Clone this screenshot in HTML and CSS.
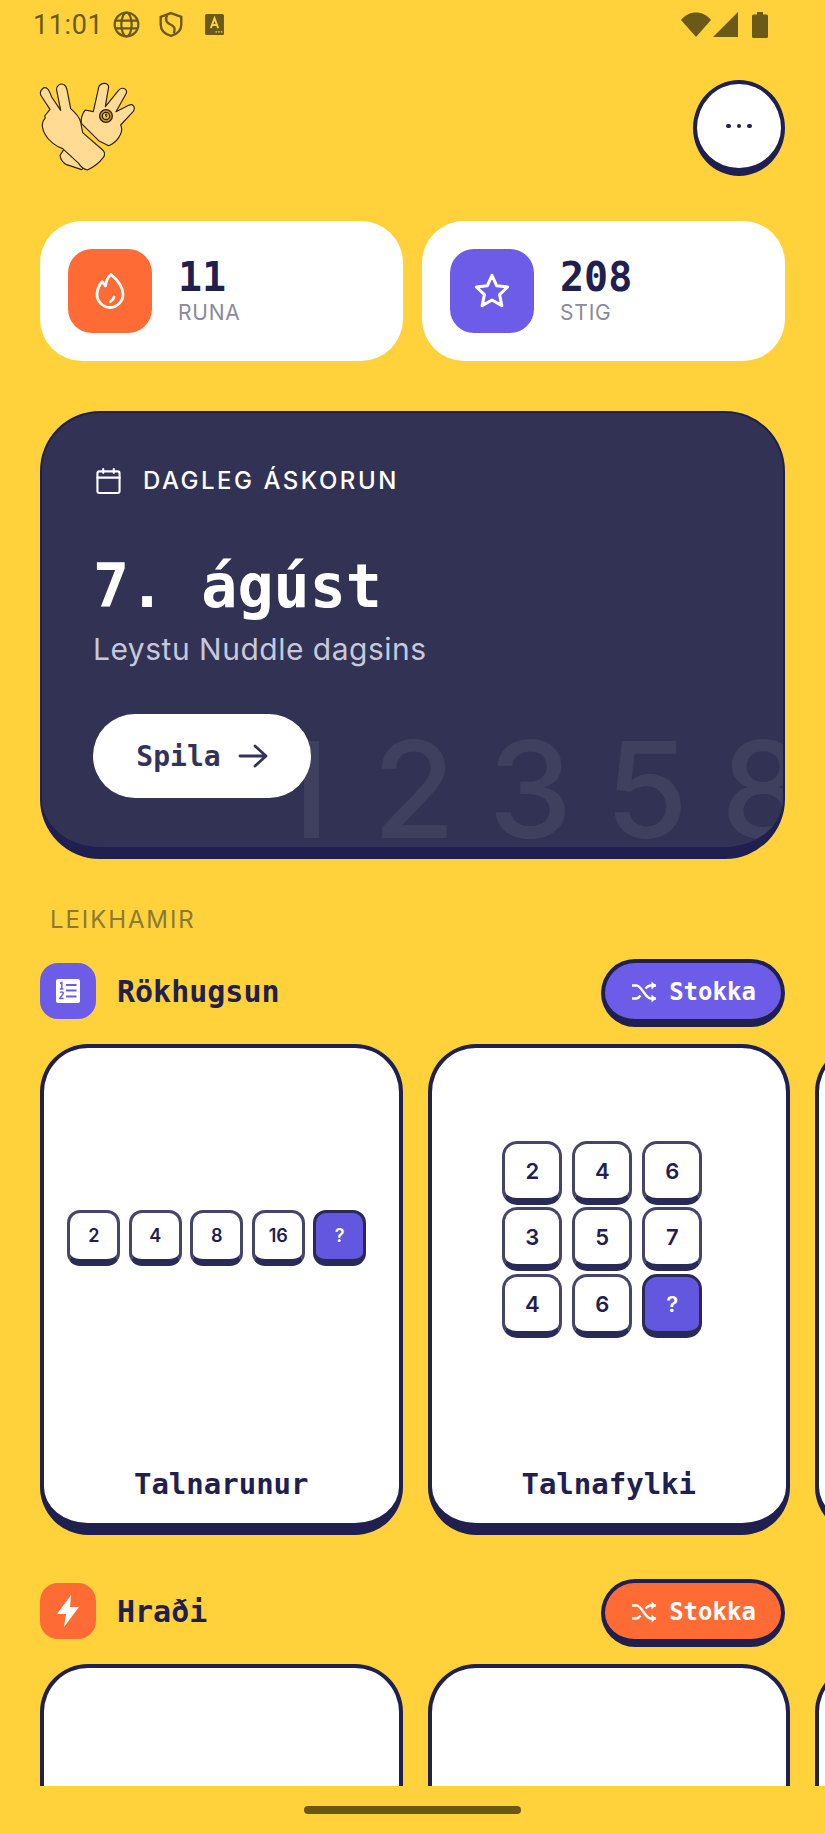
FILE: index.html
```html
<!DOCTYPE html>
<html lang="is">
<head>
  <meta charset="UTF-8">
  <title>Nuddle</title>
  <link rel="stylesheet" href="styles.css">
</head>
<body>
  <div class="screen">
    <div class="status-bar">
      <span class="clock">11:01</span>
      <svg class="status-icon globe" viewBox="0 0 24 24" fill="none" stroke="#6b5a17" stroke-width="2"><circle cx="12" cy="12" r="10.500"/><ellipse cx="12" cy="12" rx="4.600" ry="10.500"/><path d="M2 8.500h20M2 15.500h20"/></svg>
      <svg class="status-icon shield" viewBox="0 0 24 24" fill="none" stroke="#6b5a17" stroke-width="2.200"><path d="M12 1.500 21.500 5v7c0 5.500-4 9-9.500 10.500C6.500 21 2.500 17.500 2.500 12V5z"/><path d="M8.500 3.500C6 8 8 10.500 11.500 12c3.500 1.500 5 4 3 8"/></svg>
      <svg class="status-icon sim" viewBox="0 0 18 20"><rect width="18" height="20" rx="1.500" fill="#6b5a17"/><path d="M5.500 13.500 9 4l3.500 9.500M6.800 10.500h4.400" fill="none" stroke="#ffd23b" stroke-width="1.800"/><path d="M10 17h1.500M12.500 17H14M15 17h1.500" stroke="#ffd23b" stroke-width="1.200"/></svg>
      <span class="status-spacer"></span>
      <svg class="status-icon wifi" viewBox="0 0 30 25"><path d="M15 25 0 8C4 3 9 .5 15 .5S26 3 30 8z" fill="#6b5a17"/></svg>
      <svg class="status-icon signal" viewBox="0 0 25 25"><path d="M25 0v25H0z" fill="#6b5a17"/></svg>
      <svg class="status-icon battery" viewBox="0 0 16 26"><path d="M5 0h6v2.500h3.500a1.500 1.500 0 0 1 1.500 1.500v20.500a1.500 1.500 0 0 1-1.500 1.500h-13A1.500 1.500 0 0 1 0 24.500V4a1.500 1.500 0 0 1 1.500-1.500H5z" fill="#6b5a17"/></svg>
    </div>

    <header class="top-row">
      <svg class="logo" viewBox="0 0 360 300" fill="#ffdb94" stroke="#2a2208" stroke-width="3.500" stroke-linejoin="round">
        <path d="M105 203 90 226c2 12 8 22 20 28l45 15 25-20z"/>
        <path d="M190 95 206 22c3-13 28-18 30-2L226 80 265 32c8-12 28-8 24 8L258 95 296 76c12-6 22 4 14 18L272 135c6 12 3 25-6 38-8 12-20 20-30 24l-30-15-52-52c-2-12 2-30 12-40z"/>
        <path d="M32 45C28 30 42 18 52 26c5 4 8 12 13 25l27 40-12-60C78 18 90 8 102 14c8 4 8 12 10 20l10 52c14 12 26 24 30 40l6 32 60 52c6 6 8 14 2 22-12 16-30 30-48 38-10-2-20-10-26-20l-48-44c-20-6-42-24-52-42-8-14-12-30-6-42l6-8-2-6 16-20z"/>
        <circle cx="228" cy="108" r="19" fill="#c99a2e" stroke-width="4"/>
        <circle cx="228" cy="108" r="11" fill="#ffd23b" stroke-width="4"/>
        <path d="M225 103h6l-5 5h6l-5 5" fill="none" stroke-width="3"/>
      </svg>
      <button class="menu-btn" type="button"><span></span><span></span><span></span></button>
    </header>

    <section class="stats">
      <div class="stat-card">
        <div class="stat-icon orange">
          <svg class="flame" viewBox="0 0 30 36" fill="none" stroke="#fff" stroke-width="2.800" stroke-linecap="round" stroke-linejoin="round"><path d="M16 1.500c6 5 12 12 12 20 0 7-6 13-13 13S2 28.500 2 21.500c0-5 2-9 5-13l3.500 4.500C11 8 13 4 16 1.500z"/><path d="M19 24c-.5 2-1.500 3.500-3.500 4.500"/></svg>
        </div>
        <div class="stat-text">
          <span class="stat-value">11</span>
          <span class="stat-label">RUNA</span>
        </div>
      </div>
      <div class="stat-card">
        <div class="stat-icon purple">
          <svg viewBox="0 0 38 38" fill="none" stroke="#fff" stroke-width="3.200" stroke-linejoin="round"><path d="M19 2.500 24 13.500l11.500 1.300-8.500 8 2.400 11.700L19 28.500 8.600 34.500 11 22.800l-8.500-8L14 13.500z"/></svg>
        </div>
        <div class="stat-text">
          <span class="stat-value">208</span>
          <span class="stat-label">STIG</span>
        </div>
      </div>
    </section>

    <section class="daily-card">
      <div class="daily-numbers"><span>1</span><span>2</span><span>3</span><span>5</span><span>8</span></div>
      <div class="daily-head">
        <svg viewBox="0 0 26 28" fill="none" stroke="#fff" stroke-width="2.200" stroke-linecap="round"><rect x="1.500" y="4" width="23" height="22.500" rx="2"/><path d="M1.500 10.500h23M7.500 1.500v4M18.500 1.500v4"/></svg>
        <span>DAGLEG ÁSKORUN</span>
      </div>
      <h1 class="daily-date">7. ágúst</h1>
      <p class="daily-sub">Leystu Nuddle dagsins</p>
      <button class="play-btn" type="button">
        Spila
        <svg viewBox="0 0 30 24" fill="none" stroke="#32325a" stroke-width="2.800" stroke-linecap="round" stroke-linejoin="round"><path d="M2 12h26M17 2l11 10-11 10"/></svg>
      </button>
    </section>

    <h2 class="modes-title">LEIKHAMIR</h2>

    <div class="section-head">
      <div class="section-icon purple">
        <svg viewBox="0 0 24 24"><rect width="24" height="24" rx="2" fill="#fff"/><path d="M4 4.500 5.800 3.500v6.500M3.800 10h3.600M4 13.500c1-1 3.500-.7 3.300 1-.2 1.500-2.500 2.500-3.500 5h3.800" fill="none" stroke="#6c5ce7" stroke-width="1.500"/><path d="M10 6h10.500M10 11.500h10.500M10 17.500h10.500" stroke="#6c5ce7" stroke-width="1.800"/></svg>
      </div>
      <h3 class="section-title">Rökhugsun</h3>
      <button class="shuffle-btn purple" type="button">
        <svg viewBox="0 0 26 22" fill="none" stroke="#fff" stroke-width="2.400"><path d="M1 4.500h4.500c5 0 9 13 14 13H25M1 17.500h4.500c1.500 0 3-1.500 4-3M14.500 7.500c1.500-1.500 3-3 5-3H25"/><path d="M20.500 .5v8l4.500-4zM20.500 13.500v8l4.500-4z" fill="#fff" stroke="none"/></svg>
        Stokka
      </button>
    </div>

    <div class="card-row">
      <article class="game-card">
        <div class="game-preview">
          <div class="seq">
            <div class="tile small">2</div>
            <div class="tile small">4</div>
            <div class="tile small">8</div>
            <div class="tile small">16</div>
            <div class="tile small ask">?</div>
          </div>
        </div>
        <div class="game-name">Talnarunur</div>
      </article>
      <article class="game-card">
        <div class="game-preview">
          <div class="matrix">
            <div class="tile">2</div><div class="tile">4</div><div class="tile">6</div>
            <div class="tile">3</div><div class="tile">5</div><div class="tile">7</div>
            <div class="tile">4</div><div class="tile">6</div><div class="tile ask">?</div>
          </div>
        </div>
        <div class="game-name">Talnafylki</div>
      </article>
      <article class="game-card"></article>
    </div>

    <div class="section-head second">
      <div class="section-icon orange">
        <svg viewBox="0 0 24 32"><path d="M15 0 1 19h9l-2 13 15-20h-9z" fill="#fff"/></svg>
      </div>
      <h3 class="section-title">Hraði</h3>
      <button class="shuffle-btn orange" type="button">
        <svg viewBox="0 0 26 22" fill="none" stroke="#fff" stroke-width="2.400"><path d="M1 4.500h4.500c5 0 9 13 14 13H25M1 17.500h4.500c1.500 0 3-1.500 4-3M14.500 7.500c1.500-1.500 3-3 5-3H25"/><path d="M20.500 .5v8l4.500-4zM20.500 13.500v8l4.500-4z" fill="#fff" stroke="none"/></svg>
        Stokka
      </button>
    </div>

    <div class="card-row">
      <article class="game-card"></article>
      <article class="game-card"></article>
      <article class="game-card"></article>
    </div>

    <div class="nav-bar"><span class="nav-handle"></span></div>
  </div>
</body>
</html>
```

FILE: styles.css
```css
* {
  box-sizing: border-box;
}

html, body {
  margin: 0;
  height: 100%;
}

body {
  background-color: #ffd23b;
  font-family: 'Inter', sans-serif;
  color: #1f2050;
}

button {
  font: inherit;
  cursor: pointer;
}

h1, h2, h3, p {
  margin: 0;
}

.screen {
  position: relative;
  width: 825px;
  height: 1834px;
  overflow: hidden;
  padding: 0 40px;
}

/* status bar */
.status-bar {
  display: flex;
  align-items: center;
  height: 48px;
  margin: 0 -7px;
  padding-top: 1px;
}

.clock {
  font-family: 'Roboto', sans-serif;
  font-size: 27px;
  color: #6b5a17;
  letter-spacing: .6px;
  margin-right: 10px;
}

.status-icon {
  flex: none;
  display: block;
}

.globe { width: 27px; height: 27px; margin-right: 18px; }
.shield { width: 26px; height: 27px; margin-right: 21px; }
.sim { width: 19px; height: 21px; }
.status-spacer { flex: 1; }
.wifi { width: 30px; height: 25px; margin-right: 2px; }
.signal { width: 25px; height: 25px; margin-right: 14px; }
.battery { width: 16px; height: 26px; margin-right: 24px; }

/* logo + menu */
.top-row {
  display: flex;
  justify-content: space-between;
  align-items: flex-start;
  padding-top: 32px;
  height: 173px;
}

.logo {
  width: 120px;
  height: 100px;
  margin-left: -10px;
}

.menu-btn {
  width: 92px;
  height: 96px;
  border: 4px solid #1f2050;
  border-bottom-width: 8px;
  border-radius: 50%;
  background: #fff;
  display: flex;
  align-items: center;
  justify-content: center;
  gap: 6px;
  padding: 0;
}

.menu-btn span {
  width: 4.500px;
  height: 4.500px;
  border-radius: 50%;
  background: #1f2050;
}

/* stats */
.stats {
  display: grid;
  grid-template-columns: 363px 363px;
  gap: 19px;
}

.stat-card {
  height: 140px;
  background: #fff;
  border-radius: 42px;
  padding: 28px;
  display: flex;
  align-items: center;
  gap: 26px;
}

.stat-icon {
  width: 84px;
  height: 84px;
  border-radius: 24px;
  display: flex;
  align-items: center;
  justify-content: center;
  flex: none;
}

.stat-icon svg {
  width: 36px;
  height: 36px;
}

.orange { background: #ff6b35; }
.purple { background: #6c5ce7; }

.stat-text {
  display: flex;
  flex-direction: column;
  margin-top: -2px;
}

.stat-value {
  font-family: 'DejaVu Sans Mono', monospace;
  font-weight: bold;
  font-size: 40px;
  line-height: 46px;
  color: #1f2050;
}

.stat-label {
  font-size: 21px;
  line-height: 26px;
  color: #8a8a9c;
  letter-spacing: .8px;
}

/* daily card */
.daily-card {
  position: relative;
  margin-top: 50px;
  height: 448px;
  background: #323254;
  border: 2px solid #1f2050;
  border-bottom: 12px solid #1f2050;
  border-radius: 60px;
  padding: 53px 51px 0;
  overflow: hidden;
}

.daily-numbers {
  position: absolute;
  left: 232px;
  top: 321px;
  display: flex;
  gap: 33px;
  font-size: 134px;
  line-height: 110px;
  font-weight: 500;
  color: rgba(255, 255, 255, .065);
}

.daily-numbers span:first-child {
  margin-right: 10px;
}

.daily-head {
  position: relative;
  display: flex;
  align-items: center;
  gap: 22px;
  margin-left: 3px;
  color: #fff;
  font-size: 24px;
  font-weight: 500;
  letter-spacing: 2.500px;
  line-height: 30px;
}

.daily-head svg {
  width: 25px;
  height: 28px;
}

.daily-date {
  position: relative;
  margin-top: 55px;
  font-family: 'DejaVu Sans Mono', monospace;
  font-size: 60px;
  line-height: 70px;
  font-weight: bold;
  color: #fff;
}

.daily-sub {
  position: relative;
  margin-top: 10px;
  font-size: 30px;
  line-height: 36px;
  letter-spacing: .5px;
  color: #c7c8dc;
}

.play-btn {
  position: relative;
  margin-top: 47px;
  width: 218px;
  height: 84px;
  border: none;
  border-radius: 42px;
  background: #fff;
  color: #32325a;
  font-family: 'DejaVu Sans Mono', monospace;
  font-weight: bold;
  font-size: 28px;
  display: flex;
  align-items: center;
  justify-content: center;
  gap: 17px;
}

.play-btn svg {
  width: 30px;
  height: 24px;
}

/* modes */
.modes-title {
  margin: 46px 0 0 10px;
  font-size: 24px;
  line-height: 30px;
  font-weight: 400;
  letter-spacing: 1.900px;
  color: #8a7a35;
}

.section-head {
  display: flex;
  align-items: center;
  margin-top: 24px;
  height: 68px;
}

.section-head.second {
  margin-top: 44px;
}

.section-icon {
  width: 56px;
  height: 56px;
  border-radius: 18px;
  display: flex;
  align-items: center;
  justify-content: center;
  margin-right: 21px;
  margin-top: -4px;
}

.section-icon.purple svg {
  width: 24px;
  height: 24px;
}

.section-icon.orange svg {
  width: 24px;
  height: 32px;
}

.section-title {
  flex: 1;
  font-family: 'DejaVu Sans Mono', monospace;
  font-size: 30px;
  font-weight: bold;
  margin-top: -4px;
}

.shuffle-btn {
  width: 184px;
  height: 68px;
  border: 4px solid #1f2050;
  border-bottom-width: 8px;
  border-radius: 34px;
  color: #fff;
  font-family: 'DejaVu Sans Mono', monospace;
  font-weight: bold;
  font-size: 24px;
  display: flex;
  align-items: center;
  justify-content: center;
  gap: 11px;
  padding: 2px 0 0;
}

.shuffle-btn svg {
  width: 28px;
  height: 22px;
}

.card-row {
  display: flex;
  gap: 25px;
  margin-top: 17px;
}

.game-card {
  flex: none;
  width: 362.500px;
  height: 491px;
  background: #fff;
  border: 4px solid #1f2050;
  border-bottom-width: 12px;
  border-radius: 48px;
  display: flex;
  flex-direction: column;
}

.game-preview {
  flex: 1;
  display: flex;
  align-items: center;
  justify-content: center;
}

.game-name {
  text-align: center;
  font-family: 'DejaVu Sans Mono', monospace;
  font-weight: bold;
  font-size: 29px;
  line-height: 36px;
  padding-bottom: 21px;
  color: #1f2050;
}

/* number tiles */
.seq {
  display: flex;
  gap: 8.500px;
  margin: 0 9px 39px 0;
}

.matrix {
  display: grid;
  grid-template-columns: repeat(3, 60px);
  column-gap: 10px;
  row-gap: 2.500px;
  margin: 0 13px 36px 0;
}

.tile {
  width: 60px;
  height: 64px;
  background: #fff;
  border: 3px solid #45456b;
  border-bottom: 7px solid #2a2a58;
  border-radius: 15px;
  display: flex;
  align-items: center;
  justify-content: center;
  font-size: 22px;
  font-weight: 600;
  color: #1f2050;
}

.tile.small {
  width: 53px;
  height: 56px;
  border-radius: 13px;
  font-size: 18px;
}

.tile.ask {
  background: #6357df;
  border-color: #2a2a58;
  color: #fff;
}

/* gesture bar */
.nav-bar {
  position: absolute;
  left: 0;
  right: 0;
  bottom: 0;
  height: 48px;
  background: #ffd23b;
  display: flex;
  justify-content: center;
  padding-top: 20px;
}

.nav-handle {
  width: 217px;
  height: 8px;
  border-radius: 4px;
  background: #6b5710;
}
```
